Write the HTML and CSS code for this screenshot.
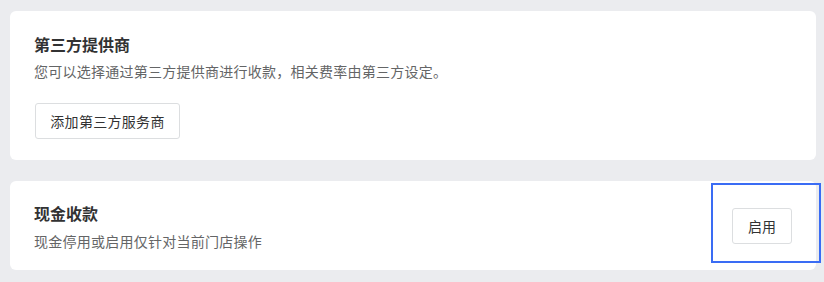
FILE: index.html
```html
<!DOCTYPE html>
<html lang="zh-CN">
<head>
<meta charset="utf-8">
<title>收款设置</title>
<link rel="stylesheet" href="styles.css">
</head>
<body>
<div class="page">
  <section class="card card-provider">
    <h2 class="card-title">第三方提供商</h2>
    <p class="card-desc">您可以选择通过第三方提供商进行收款，相关费率由第三方设定。</p>
    <button class="btn btn-wide" type="button">添加第三方服务商</button>
  </section>
  <section class="card card-cash">
    <div class="card-main">
      <h2 class="card-title">现金收款</h2>
      <p class="card-desc">现金停用或启用仅针对当前门店操作</p>
    </div>
    <button class="btn btn-small" type="button">启用</button>
    <div class="highlight"></div>
  </section>
</div>
</body>
</html>
```

FILE: styles.css
```css
* { box-sizing: border-box; }
html, body {
  margin: 0;
  padding: 0;
  background: #ebecef;
}
body {
  font-family: "Noto Sans CJK SC", "Noto Sans", sans-serif;
  color: #323233;
}
.page {
  padding: 11px 8px 0 10px;
  display: flex;
  flex-direction: column;
  gap: 21px;
}
.card {
  background: #ffffff;
  border-radius: 6px;
  position: relative;
}
.card-provider {
  height: 149px;
  padding: 22px 24px 0 24px;
}
.card-cash {
  height: 89px;
  padding: 21px 24px 0 24px;
  display: flex;
  align-items: flex-start;
  justify-content: space-between;
}
.card-title {
  margin: 0;
  font-size: 16px;
  line-height: 22px;
  font-weight: 700;
  color: #323233;
}
.card-desc {
  margin: 6px 0 0;
  font-size: 14px;
  line-height: 20px;
  color: #646566;
  letter-spacing: 0.25px;
}
.card-cash .card-desc { margin-top: 7px; }
.btn {
  font-family: inherit;
  background: #ffffff;
  border: 1px solid #dcdee0;
  border-radius: 3px;
  color: #323233;
  font-size: 14px;
  height: 36px;
  line-height: 34px;
  padding: 0;
  white-space: nowrap;
  cursor: pointer;
}
.btn-wide {
  display: block;
  margin-top: 22px;
  margin-left: 1px;
  width: 145px;
  letter-spacing: 0.3px;
}
.btn-small {
  width: 60px;
  margin-top: 6px;
}
.highlight {
  position: absolute;
  left: 701px;
  top: 2px;
  width: 110px;
  height: 80px;
  border: 2px solid #3a6cf4;
  pointer-events: none;
}
```
